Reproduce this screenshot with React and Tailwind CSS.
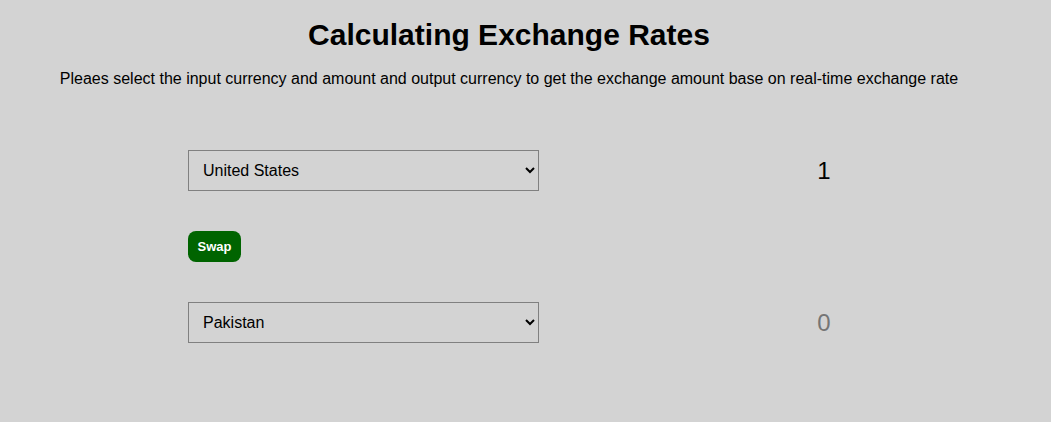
import React, { useState } from "react";

const countries = ["United States", "Pakistan", "United Kingdom", "India", "Japan"];

const App = () => {
  const [from, setFrom] = useState("United States");
  const [to, setTo] = useState("Pakistan");

  const handleSwap = () => {
    setFrom(to);
    setTo(from);
  };

  return (
    <div className="min-h-screen bg-[#d3d3d3] text-black font-['Liberation_Sans',Arial,sans-serif]">
      <div className="w-[1018px] text-center pt-[18px]">
        <h1 className="text-[30px] leading-[34px] font-bold">Calculating Exchange Rates</h1>
        <p className="mt-[18px] text-[16px] leading-[18px]">
          Pleaes select the input currency and amount and output currency to get the exchange amount base on real-time exchange rate
        </p>
      </div>

      <div className="flex flex-col items-start pl-[188px] mt-[62px]">
        <div className="flex items-center">
          <select
            value={from}
            onChange={(e) => setFrom(e.target.value)}
            className="w-[351px] h-[41px] border border-[#808080] pl-[10px] pr-[6px] text-[16px]"
          >
            {countries.map((c) => (
              <option key={c}>{c}</option>
            ))}
          </select>
          <div className="w-[200px] ml-[185px] text-center text-[24px] leading-[28px]">1</div>
        </div>

        <button
          onClick={handleSwap}
          className="mt-[40px] w-[53px] h-[31px] rounded-[8px] bg-[#006400] text-white text-[13px] font-bold"
        >
          Swap
        </button>

        <div className="flex items-center mt-[40px]">
          <select
            value={to}
            onChange={(e) => setTo(e.target.value)}
            className="w-[351px] h-[41px] border border-[#808080] pl-[10px] pr-[6px] text-[16px]"
          >
            {countries.map((c) => (
              <option key={c}>{c}</option>
            ))}
          </select>
          <div className="w-[200px] ml-[185px] text-center text-[24px] leading-[28px] text-[#757575]">0</div>
        </div>
      </div>
    </div>
  );
};

export default App;
